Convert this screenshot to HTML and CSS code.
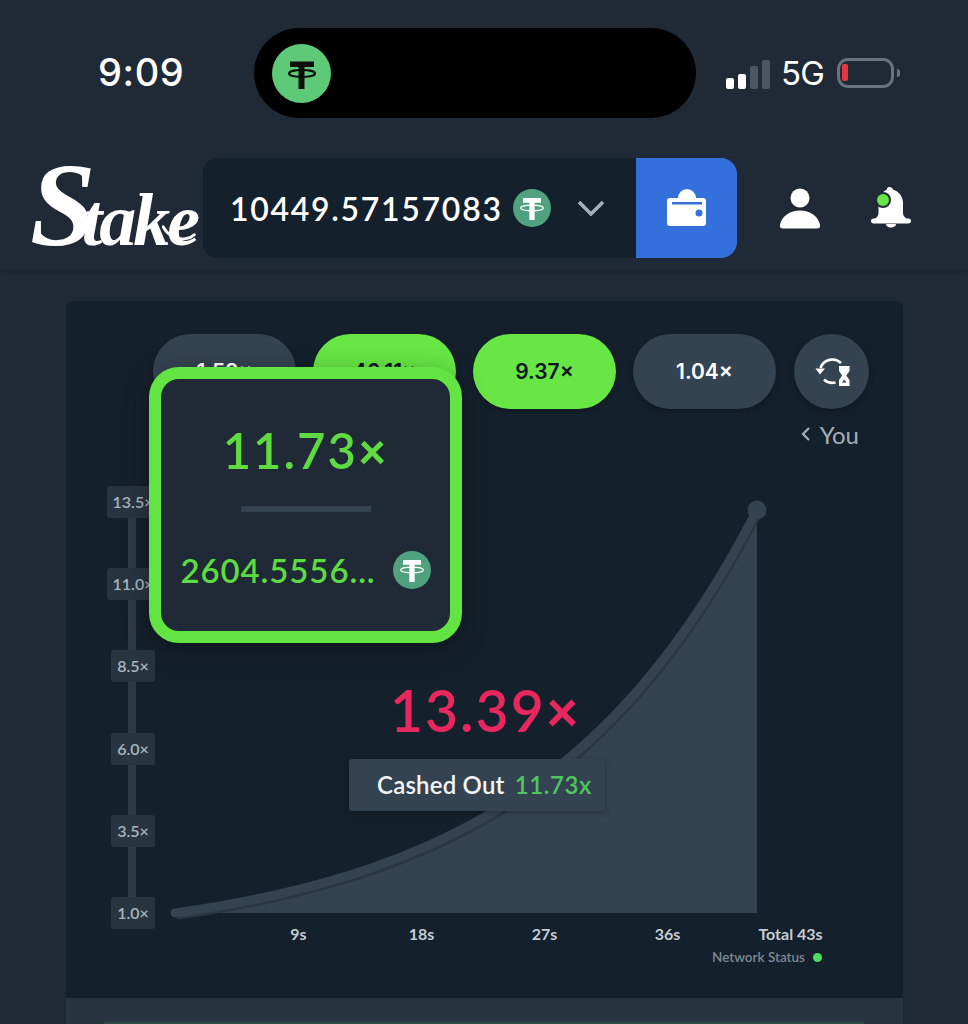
FILE: index.html
```html
<!DOCTYPE html>
<html lang="en">
<head>
<meta charset="UTF-8">
<title>Stake</title>
<link rel="stylesheet" href="styles.css">
</head>
<body>
	<svg class="defs" width="0" height="0">
		<symbol id="tether" viewBox="0 0 40 40">
			<circle cx="20" cy="20" r="20" fill="#50a27f"/>
			<path d="M10.5 9.5h19v5h-6.7v18h-5.600v-18h-6.700z" fill="#fff"/>
			<ellipse cx="20" cy="20" rx="12" ry="3" fill="none" stroke="#fff" stroke-width="1.200"/>
		</symbol>
		<symbol id="tether-dark" viewBox="0 0 59 59">
			<circle cx="29.500" cy="29.500" r="29.500" fill="#5ec977"/>
			<path d="M18 17.500h24v5.500h-9.500v22h-6v-22H18z" fill="#0a0f0c"/>
			<ellipse cx="30" cy="29.500" rx="13" ry="3.400" fill="none" stroke="#0a0f0c" stroke-width="2"/>
		</symbol>
	</svg>

	<div class="status">
		<div class="time">9:09</div>
		<div class="island">
			<svg class="coin coin-island"><use href="#tether-dark"/></svg>
		</div>
		<div class="signal">
			<i class="on b1"></i><i class="on b2"></i><i class="b3"></i><i class="b4"></i>
		</div>
		<div class="net">5G</div>
		<div class="battery"><i></i></div>
		<div class="nub"></div>
	</div>

	<div class="topbar">
		<div class="logo">
			<span class="logo-s">S</span>take
			<svg class="logo-tail" viewBox="0 0 60 30"><path d="M2 4c8 14 22 24 40 21 6-1 11-3 15-7"/></svg>
		</div>
		<div class="balance">
			<span class="amount">10449.57157083</span>
			<svg class="coin"><use href="#tether"/></svg>
			<svg class="chevron" viewBox="0 0 28 16"><path d="M2 2l12 12L26 2"/></svg>
		</div>
		<div class="wallet">
			<svg class="ico-wallet" viewBox="667 189 39 38">
				<circle cx="687" cy="198" r="9" fill="#fff"/>
				<rect x="667" y="198" width="39" height="28" rx="3" fill="#fff"/>
				<rect x="672" y="202" width="30" height="2.500" fill="#3470dc"/>
				<circle cx="699" cy="213" r="3.500" fill="#3470dc"/>
			</svg>
		</div>
		<svg class="ico-user" viewBox="780 188 40 41">
			<circle cx="800" cy="198" r="9.500" fill="#fff"/>
			<path d="M783 228.500c-2.500 0-3.500-1.500-3-3.500 1.500-9 10-14.500 20-14.500s18.500 5.500 20 14.500c.5 2-.5 3.500-3 3.500z" fill="#fff"/>
		</svg>
		<svg class="ico-bell" viewBox="870 186 42 42">
			<path d="M889 187c2.500 0 3.500 1 4 2.500 6 2 10 7 10 13.500v10c0 2.500 1.500 4.500 3.500 5.500h2c1.500 0 2.500 1 2.500 2.500s-1 2.500-2.500 2.500h-35c-1.500 0-2.500-1-2.500-2.500s1-2.500 2.500-2.500h1.500c2-1 3.500-3 3.500-5.500v-10c0-6 3.500-11 8.500-13.500 0-1.500 .5-2.500 2-2.500z" fill="#fff"/>
			<path d="M886 224h10c0 2-2 3.500-5 3.500s-5-1.500-5-3.500z" fill="#fff"/>
			<circle cx="883" cy="200" r="8" fill="#1f2a36"/>
			<circle cx="883" cy="200" r="6" fill="#67e645"/>
		</svg>
	</div>

	<div class="panel">
		<div class="pills">
			<div class="pill">1.52×</div>
			<div class="pill win">46.11×</div>
			<div class="pill win">9.37×</div>
			<div class="pill">1.04×</div>
			<div class="pill round">
				<svg class="ico-history" viewBox="813 356 38 34">
					<path d="M840 364a12.500 12.500 0 0 0-20.500 5" fill="none" stroke="#fff" stroke-width="2.600"/>
					<path d="M814.500 369.500h9.500l-5 6z" fill="#fff"/>
					<path d="M823 380.500a12.500 12.500 0 0 0 11.500 3" fill="none" stroke="#fff" stroke-width="2.600"/>
					<path d="M838 367h10.500v5l-3.200 4.500 3.200 4.500v6H838v-6l3.200-4.500-3.200-4.500z" fill="#fff"/>
					<path d="M841 383.500l2.200-3 2.300 3z" fill="#344351"/>
				</svg>
			</div>
		</div>
		<div class="you"><svg class="you-arrow" viewBox="0 0 10 16"><path d="M8 2L2 8l6 6"/></svg>You</div>

		<div class="chart">
			<svg class="curve" viewBox="107 486 740 443">
				<path class="area" d="M175 913C208.300 908.200 241.700 902.400 275 895C308.300 887.500 341.700 878.400 375 866.700C408.300 855 441.700 840.700 475 822.400C508.300 804.100 541.700 781.800 575 753C608.300 724.200 641.700 689.100 675 644C702.300 607 729.700 563.500 757 510V913H175z"/>
				<path class="edge" d="M175 913C208.300 908.200 241.700 902.400 275 895C308.300 887.500 341.700 878.400 375 866.700C408.300 855 441.700 840.700 475 822.400C508.300 804.100 541.700 781.800 575 753C608.300 724.200 641.700 689.100 675 644C702.300 607 729.700 563.500 757 510"/>
				<path class="line" d="M175 913C208.300 908.200 241.700 902.400 275 895C308.300 887.500 341.700 878.400 375 866.700C408.300 855 441.700 840.700 475 822.400C508.300 804.100 541.700 781.800 575 753C608.300 724.200 641.700 689.100 675 644C702.300 607 729.700 563.500 757 510"/>
				<circle cx="757" cy="510" r="9.500" fill="#344351"/>
			</svg>

			<div class="yaxis">
				<div class="tick">13.5×</div>
				<div class="tick">11.0×</div>
				<div class="tick">8.5×</div>
				<div class="tick">6.0×</div>
				<div class="tick">3.5×</div>
				<div class="tick">1.0×</div>
			</div>

			<div class="result">
				<div class="crash">13.39<span class="times">×</span></div>
				<div class="cashed">Cashed Out <span class="cashed-val">11.73x</span></div>
			</div>
		</div>

		<div class="xaxis">
			<span>9s</span>
			<span>18s</span>
			<span>27s</span>
			<span>36s</span>
			<span>Total 43s</span>
		</div>
		<div class="network">Network Status <i></i></div>

		<div class="popover">
			<div class="pop-multi">11.73<span class="times">×</span></div>
			<div class="pop-line"></div>
			<div class="pop-profit">
				<span>2604.5556...</span>
				<svg class="coin"><use href="#tether"/></svg>
			</div>
		</div>
	</div>
	<div class="strip"><div class="strip-line"></div></div>
</body>
</html>
```

FILE: styles.css
```css
* {
	box-sizing: border-box;
}
html, body {
	margin: 0;
	height: 1024px;
	overflow: hidden;
}
body {
	background: #1f2a36;
	color: #fff;
	font-family: "Lato", "Liberation Sans", sans-serif;
}
.defs {
	display: block;
	height: 0;
}
.coin {
	display: block;
	width: 38px;
	height: 38px;
	flex: none;
}
.coin-island {
	width: 59px;
	height: 59px;
}
.times {
	font-weight: 900;
}

/* status bar */
.status {
	display: flex;
	align-items: center;
	height: 90px;
	margin: 28px 0 40px;
	padding-left: 98px;
}
.time {
	width: 86px;
	margin-top: -2px;
	font-family: "Inter", sans-serif;
	font-size: 38px;
	font-weight: 500;
	letter-spacing: .6px;
}
.island {
	display: flex;
	align-items: center;
	width: 442px;
	height: 90px;
	margin-left: 70px;
	padding-left: 18px;
	background: #000;
	border-radius: 45px;
}
.signal {
	display: flex;
	align-items: flex-end;
	gap: 4px;
	height: 29px;
	margin: 2px 0 0 30px;
}
.signal i {
	display: block;
	width: 8px;
	background: #4b5661;
	border-radius: 2px;
}
.signal .on {
	background: #fff;
}
.b1 { height: 11px; }
.b2 { height: 15px; }
.b3 { height: 23px; }
.b4 { height: 29px; }
.net {
	margin-left: 11px;
	font-family: "Inter", sans-serif;
	font-size: 33px;
	letter-spacing: -.8px;
}
.battery {
	width: 57px;
	height: 30px;
	margin: 0 0 0 13px;
	padding: 3px 2px;
	border: 3px solid #69737d;
	border-radius: 11px;
}
.battery i {
	display: block;
	width: 6px;
	height: 17px;
	background: #e5383b;
	border-radius: 2px;
}
.nub {
	width: 3px;
	height: 8px;
	margin-left: 3px;
	background: #69737d;
	border-radius: 0 3px 3px 0;
}

/* header */
.topbar {
	display: flex;
	align-items: flex-start;
	height: 112px;
	box-shadow: 0 2px 3px rgba(0, 0, 0, .16);
}
.logo {
	position: relative;
	width: 171px;
	height: 100px;
	margin-left: 30px;
	padding-top: 18px;
	font-family: "Liberation Serif", serif;
	font-size: 74px;
	font-style: italic;
	font-weight: 700;
	line-height: 80px;
	letter-spacing: -3px;
	white-space: nowrap;
}
.logo-s {
	font-size: 118px;
	line-height: 60px;
	letter-spacing: -14px;
}
.logo-tail {
	position: absolute;
	top: 66px;
	left: 132px;
	width: 34px;
	height: 18px;
	fill: none;
	stroke: #fff;
	stroke-width: 5;
	stroke-linecap: round;
}
.balance {
	display: flex;
	align-items: center;
	width: 433px;
	height: 100px;
	margin-left: 2px;
	padding-left: 27px;
	background: #14202c;
	border-radius: 14px 0 0 14px;
}
.amount {
	width: 272px;
	margin-right: 11px;
	font-size: 32px;
	font-weight: 600;
	letter-spacing: 1.700px;
}
.chevron {
	width: 28px;
	height: 16px;
	margin-left: 26px;
	fill: none;
	stroke: #a5b0bc;
	stroke-width: 3.500;
}
.wallet {
	display: flex;
	align-items: center;
	justify-content: center;
	width: 101px;
	height: 100px;
	background: #3470dc;
	border-radius: 0 16px 16px 0;
}
.ico-wallet {
	width: 39px;
	height: 38px;
}
.ico-user {
	width: 40px;
	height: 41px;
	margin: 30px 0 0 43px;
}
.ico-bell {
	width: 42px;
	height: 42px;
	margin: 28px 0 0 50px;
}

/* game panel */
.panel {
	position: relative;
	width: 837px;
	height: 697px;
	margin: 31px 0 0 66px;
	padding-top: 33px;
	background: #14202c;
	border-radius: 6px 6px 0 0;
}
.pills {
	display: flex;
	gap: 17px;
	margin-left: 87px;
}
.pill {
	display: flex;
	align-items: center;
	justify-content: center;
	width: 143px;
	height: 75px;
	background: #344351;
	border-radius: 38px;
	font-family: "Inter", sans-serif;
	font-size: 21px;
	font-weight: 600;
	box-shadow: 0 2px 5px rgba(0, 0, 0, .25);
}
.pill.win {
	background: #67e645;
	color: #0b1620;
}
.pill.round {
	width: 75px;
	margin-left: 1px;
}
.ico-history {
	width: 38px;
	height: 34px;
	margin-left: 2px;
}
.you {
	display: flex;
	align-items: center;
	justify-content: flex-end;
	height: 26px;
	margin: 12px 44px 0 0;
	color: #a3aeba;
	font-size: 24px;
}
.you-arrow {
	width: 10px;
	height: 16px;
	margin-right: 9px;
	fill: none;
	stroke: #a3aeba;
	stroke-width: 2.200;
}

/* chart */
.chart {
	position: relative;
	height: 443px;
	margin: 39px 0 0 41px;
}
.curve {
	position: absolute;
	top: 0;
	left: 0;
	width: 740px;
	height: 443px;
}
.area {
	fill: #344351;
}
.line, .edge {
	fill: none;
	stroke-linecap: round;
}
.line {
	stroke: #344351;
	stroke-width: 9;
}
.edge {
	stroke: #2a3743;
	stroke-width: 3;
	transform: translate(3px, 5px);
}
.yaxis {
	position: relative;
	display: flex;
	flex-direction: column;
	align-items: center;
	justify-content: space-between;
	width: 52px;
	height: 443px;
}
.yaxis::before {
	content: "";
	position: absolute;
	top: 10px;
	bottom: 10px;
	left: 21px;
	width: 8px;
	background: #2d3a46;
}
.tick {
	position: relative;
	height: 32px;
	padding: 0 6px;
	background: #283541;
	border-radius: 3px;
	color: #a9b4be;
	font-size: 16px;
	font-weight: 600;
	line-height: 32px;
}
.result {
	position: absolute;
	top: 194px;
	left: 242px;
	display: flex;
	flex-direction: column;
	align-items: flex-start;
	gap: 19px;
}
.crash {
	margin-left: 41px;
	color: #e8275f;
	font-size: 57px;
	font-weight: 600;
	line-height: 60px;
	letter-spacing: 2px;
}
.cashed {
	width: 256px;
	height: 52px;
	padding-left: 28px;
	background: #344351;
	border-radius: 3px;
	box-shadow: 0 2px 5px rgba(0, 0, 0, .25);
	color: #f2f4f6;
	font-size: 24px;
	font-weight: 600;
	line-height: 52px;
	letter-spacing: .2px;
	white-space: nowrap;
}
.cashed-val {
	margin-left: 4px;
	color: #4ec75e;
	letter-spacing: .6px;
}
.xaxis {
	display: flex;
	margin: -5px 0 0 171px;
	color: #c5ccd3;
	font-size: 16px;
	font-weight: 700;
	line-height: 20px;
}
.xaxis span {
	width: 123px;
	text-align: center;
}
.network {
	display: flex;
	align-items: center;
	justify-content: flex-end;
	height: 16px;
	margin: 5px 81px 0 0;
	color: #7d8894;
	font-size: 13.500px;
	font-weight: 600;
}
.network i {
	display: block;
	width: 9px;
	height: 9px;
	margin-left: 8px;
	background: #4fdc5c;
	border-radius: 50%;
}

/* popover over the history pills */
.popover {
	position: absolute;
	top: 66px;
	left: 83px;
	display: flex;
	flex-direction: column;
	align-items: center;
	width: 313px;
	height: 276px;
	padding-top: 43px;
	background: #1f2a36;
	border: 12px solid #64e442;
	border-radius: 30px;
	box-shadow: 0 6px 24px rgba(0, 0, 0, .35);
	color: #5edb40;
}
.pop-multi {
	font-size: 49px;
	font-weight: 600;
	line-height: 56px;
	letter-spacing: 2px;
}
.pop-line {
	width: 130px;
	height: 6px;
	margin-top: 28px;
	background: #344351;
}
.pop-profit {
	display: flex;
	align-items: center;
	gap: 17px;
	margin-top: 38px;
	font-size: 33px;
	font-weight: 600;
	letter-spacing: .9px;
}

.strip {
	width: 837px;
	height: 26px;
	margin-left: 66px;
	padding: 24px 39px 0 38px;
	background: #273541;
}
.strip-line {
	height: 2px;
	background: #2c4a43;
}
```
